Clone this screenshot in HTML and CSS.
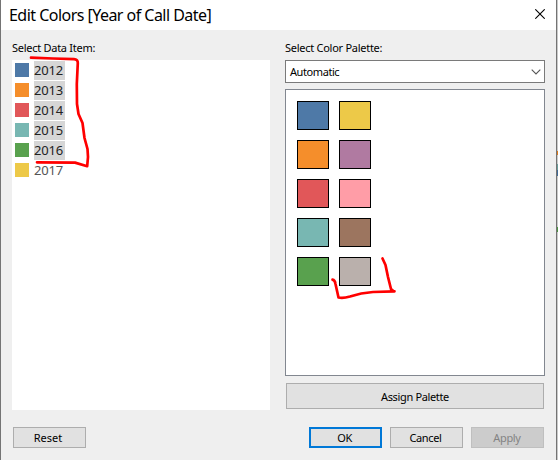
FILE: index.html
```html
<!DOCTYPE html>
<html lang="en">
<head>
<meta charset="utf-8">
<title>Edit Colors</title>
<link rel="stylesheet" href="styles.css">
</head>
<body>
<main class="dialog">
  <header class="titlebar">
    <h1>Edit Colors [Year of Call Date]</h1>
    <svg class="close" width="10" height="10" viewBox="0 0 10 10"><path d="M.3.3l9.4 9.4M9.7.3L.3 9.7"/></svg>
  </header>
  <div class="columns">
    <section class="items">
      <h2>Select Data Item:</h2>
      <ul class="item-list">
        <li><i class="chip blue"></i><span class="selected">2012</span></li>
        <li><i class="chip orange"></i><span class="selected">2013</span></li>
        <li><i class="chip red"></i><span class="selected">2014</span></li>
        <li><i class="chip teal"></i><span class="selected">2015</span></li>
        <li><i class="chip green"></i><span class="selected">2016</span></li>
        <li><i class="chip yellow"></i><span>2017</span></li>
      </ul>
    </section>
    <section class="palette">
      <h2>Select Color Palette:</h2>
      <div class="combo"><span>Automatic</span><svg width="10" height="6" viewBox="0 0 10 6"><path d="M.7.7L5 5 9.3.7"/></svg></div>
      <div class="swatches">
        <i class="blue"></i><i class="yellow"></i>
        <i class="orange"></i><i class="purple"></i>
        <i class="red"></i><i class="pink"></i>
        <i class="teal"></i><i class="brown"></i>
        <i class="green"></i><i class="gray"></i>
      </div>
      <button class="assign"><span>Assign Palette</span></button>
    </section>
  </div>
  <footer class="actions">
    <button class="reset"><span>Reset</span></button>
    <button class="ok"><span>OK</span></button>
    <button class="cancel"><span>Cancel</span></button>
    <button class="apply" disabled><span>Apply</span></button>
  </footer>
  <svg class="ink" width="558" height="460" viewBox="0 0 558 460">
    <path d="M31 57.7L53 58.5 74 59.2Q78 59.3 77.8 63L76.8 84 77 104 78.5 114 82.5 123 84.5 138 87.5 149 88 157 87.2 166.2 75 162.6 37 162.3"/>
    <path d="M332.5 279.6Q335 280 335.5 284L338.5 297.5Q343 298.6 350 296.5 361 292.8 373 292L394.5 291.3M382.5 258.5L385.5 265 388 277 391 289 394 291.5"/>
  </svg>
</main>
</body>
</html>
```
FILE: styles.css
```css
* { box-sizing: border-box; }
body {
  margin: 0;
  width: 558px;
  height: 460px;
  overflow: hidden;
  background: linear-gradient(#c9c9c9 151px, #d87a1c 151px 155px, #c9c9c9 155px 164px, #6a9c9a 164px 170px, #416a95 170px 176px, #c9c9c9 176px 227px, #4c9442 227px 232px, #c9c9c9 232px);
  font: 11px/14px "Noto Sans", sans-serif;
  letter-spacing: -.27px;
  color: #000;
}
h1, h2, ul { margin: 0; padding: 0; font-weight: 400; }
.dialog {
  position: relative;
  width: 557px;
  height: 460px;
  border: solid #747474;
  border-width: 0 1px;
  background: #efefef;
}
.titlebar {
  display: flex;
  justify-content: space-between;
  height: 30px;
  padding: 0 11px 0 8px;
  background: #fff;
}
h1 { font-size: 16px; line-height: 30px; letter-spacing: -.53px; white-space: nowrap; }
.close { margin-top: 9px; }
svg path { fill: none; stroke: #000; stroke-width: 1.1; }
.columns { display: flex; gap: 15px; height: 380px; padding: 11px 11px 0; }
.items { width: 258px; }
h2 { height: 19px; font-size: 11px; line-height: 14px; white-space: nowrap; }
.item-list { height: 350px; padding-top: 1px; background: #fff; list-style: none; }
.item-list li { display: flex; height: 20px; padding-left: 3px; }
.chip { width: 14px; height: 14px; margin: 2px 5px 0 0; }
.item-list span { width: 31px; height: 19px; font-size: 13px; line-height: 19px; letter-spacing: -.2px; color: #555; }
.item-list .selected { background: #d6d6d6; color: #222; }
.palette { width: 260px; }
.combo {
  display: flex;
  align-items: center;
  justify-content: space-between;
  height: 23px;
  padding: 0 3px 0 4px;
  border: 1px solid #7a7a7a;
  background: #fff;
  letter-spacing: -.42px;
}
.combo path { stroke: #555; }
.swatches {
  display: grid;
  grid-template-columns: 32px 32px;
  grid-auto-rows: 29px;
  align-content: start;
  gap: 10px;
  height: 287px;
  margin-top: 6px;
  padding: 11px;
  border: 1px solid #828790;
  background: #fff;
}
.swatches i { border: 1px solid #000; }
.blue { background: #4e79a7; }
.orange { background: #f58e2b; }
.red { background: #e15759; }
.teal { background: #78b7b2; }
.green { background: #59a14e; }
.yellow { background: #edc948; }
.purple { background: #b07aa1; }
.pink { background: #ff9da7; }
.brown { background: #9c755f; }
.gray { background: #bab0ac; }
button {
  width: 73px;
  height: 21px;
  padding: 0;
  border: 1px solid #adadad;
  background: #e1e1e1;
  font: inherit;
  letter-spacing: -.35px;
  color: #000;
}
.assign { display: block; width: 258px; height: 26px; margin: 7px 1px 0; padding-top: 2px; }
.actions { display: flex; gap: 8px; padding: 17px 12px 0; }
.reset { margin-right: auto; padding-right: 3px; letter-spacing: 0; }
.ok { padding-right: 2px; border: 2px solid #0078d7; }
.cancel { padding-right: 2px; }
.apply { padding-right: 1px; border-color: #bfbfbf; background: #ccc; color: #838383; }
.ink { position: absolute; left: -1px; top: 0; pointer-events: none; }
.ink path { stroke: #f00; stroke-width: 2.7; stroke-linecap: round; stroke-linejoin: round; }
```
